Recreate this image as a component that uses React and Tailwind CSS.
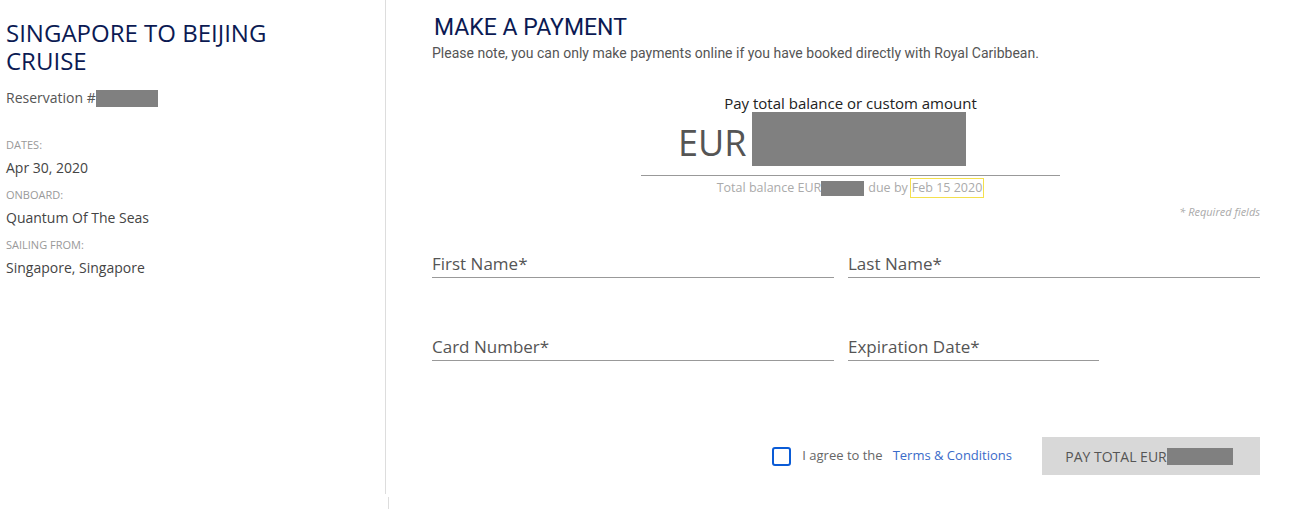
import React from "react";

const Redacted = ({ className }) => <span className={`inline-block bg-[#808080] align-middle ${className}`} />;

const Field = ({ label, className }) => (
  <div className={`border-b border-[#999] pb-[1px] ${className}`}>
    <span className="text-[17px] leading-[24px] text-[#555]">
      {label}
      <span className="text-[#555]">*</span>
    </span>
  </div>
);

const Detail = ({ label, value }) => (
  <div className="mb-[10px]">
    <div className="text-[11px] leading-[14px] text-[#999] uppercase">{label}</div>
    <div className="text-[14px] leading-[20px] text-[#444] mt-[6px]">{value}</div>
  </div>
);

const App = () => {
  return (
    <div className="w-[1313px] h-[509px] bg-white overflow-hidden font-['Open_Sans','Liberation_Sans',sans-serif]">
      <div className="flex">
        <div className="w-[386px] h-[494px] border-r border-[#ddd] pl-[6px] pt-[19px] shrink-0">
          <h1 className="text-[24px] leading-[28px] text-[#0b1a53] w-[300px]">SINGAPORE TO BEIJING CRUISE</h1>
          <div className="mt-[14px] text-[14px] leading-[18px] text-[#555] flex items-center">
            Reservation #<Redacted className="w-[62px] h-[17px]" />
          </div>
          <div className="mt-[31px]">
            <Detail label="Dates:" value="Apr 30, 2020" />
            <Detail label="Onboard:" value="Quantum Of The Seas" />
            <Detail label="Sailing From:" value="Singapore, Singapore" />
          </div>
        </div>
        <div className="flex-1 pl-[46px] pr-[53px] pt-[14px]">
          <h2 className="text-[23px] leading-[28px] text-[#0b1a53] font-['Roboto',sans-serif] pl-[2px]">MAKE A PAYMENT</h2>
          <p className="text-[14px] leading-[18px] text-[#555] font-['Roboto',sans-serif] mt-[2px]">
            Please note, you can only make payments online if you have booked directly with Royal Caribbean.
          </p>
          <div className="flex flex-col items-center mt-[32px] ml-[9px]">
            <div className="text-[15px] leading-[18px] text-[#222]">Pay total balance or custom amount</div>
            <div className="w-[419px] border-b border-[#999] flex items-end gap-[6px] pb-[9px] pl-[37px]">
              <span className="text-[36px] leading-[40px] text-[#555] mb-[3px]">EUR</span>
              <Redacted className="w-[214px] h-[54px]" />
            </div>
            <div className="text-[12.5px] leading-[18px] text-[#aaa] flex items-center mt-[2px]">
              Total balance EUR<Redacted className="w-[43px] h-[15px]" />
              <span className="ml-[4px]">due by</span>
              <span className="border border-[#f4e04d] px-[1px] ml-[2px]">Feb 15 2020</span>
            </div>
          </div>
          <div className="text-right text-[11px] leading-[14px] italic text-[#aaa] mt-[7px]">* Required fields</div>
          <div className="flex gap-[14px] mt-[33px]">
            <Field label="First Name" className="w-[402px]" />
            <Field label="Last Name" className="flex-1" />
          </div>
          <div className="flex gap-[14px] mt-[57px]">
            <Field label="Card Number" className="w-[402px]" />
            <Field label="Expiration Date" className="w-[251px]" />
          </div>
          <div className="flex justify-end items-center mt-[76px]">
            <span className="w-[19px] h-[19px] border-2 border-[#0a5bd6] rounded-[3px] mr-[11px]" />
            <span className="text-[13px] text-[#666]">I agree to the</span>
            <a className="text-[13px] text-[#3a6bc9] ml-[10px]">Terms &amp; Conditions</a>
            <button className="ml-[30px] w-[218px] h-[38px] bg-[#d8d8d8] text-[14px] text-[#555] flex items-center justify-center pr-[4px]">
              PAY TOTAL EUR<Redacted className="w-[66px] h-[17px]" />
            </button>
          </div>
        </div>
      </div>
      <div className="ml-[388px] mt-[3px] w-px h-[12px] bg-[#ddd]" />
    </div>
  );
};

export default App;
